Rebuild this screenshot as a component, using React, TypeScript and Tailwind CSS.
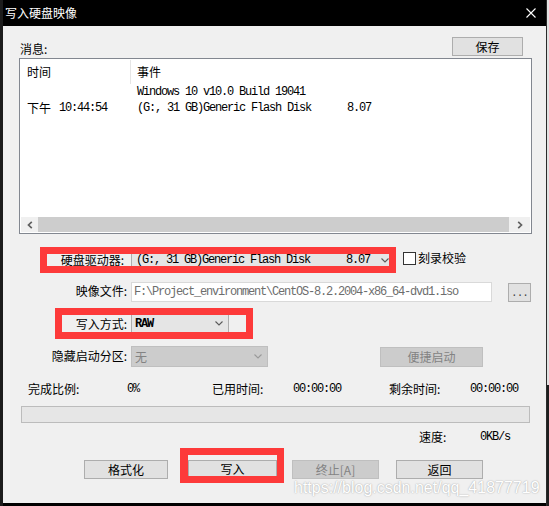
import React from "react";

const Chevron = ({ color = "#5a5a5a" }: { color?: string }) => (
  <svg width="8" height="5" viewBox="0 0 8 5" className="shrink-0">
    <path d="M0.5 0.5 L4 4 L7.5 0.5" fill="none" stroke={color} strokeWidth="1.1" />
  </svg>
);

export default function App() {
  return (
    <div className="w-[549px] h-[506px] bg-black flex overflow-hidden font-['Noto_Sans_CJK_SC','Noto_Sans',sans-serif] text-[12px] text-black">
      <div className="w-[3px] h-full bg-[#1c1c1c]" />
      <div className="w-[543px] h-full flex flex-col">
        {/* title bar */}
        <div className="h-[26px] bg-black flex items-center justify-between">
          <span className="ml-[2px] text-white text-[12px] leading-[16px]">写入硬盘映像</span>
          <svg className="mr-[10px]" width="10" height="10" viewBox="0 0 10 10">
            <path d="M0.5 0.5L9.5 9.5M9.5 0.5L0.5 9.5" stroke="white" strokeWidth="1.1" />
          </svg>
        </div>

        {/* body */}
        <div className="relative h-[477px] bg-[#f0f0f0] flex flex-col">
          {/* row: 消息 + 保存 */}
          <div className="h-[32px] flex items-start justify-between">
            <span className="ml-[17px] mt-[15px] leading-[16px]">消息:</span>
            <div className="mt-[11px] mr-[23px] w-[71px] h-[19px] bg-[#e1e1e1] border border-[#adadad] flex items-center justify-center leading-[17px]">
              保存
            </div>
          </div>

          {/* list box */}
          <div className="ml-[16px] w-[513px] h-[176px] border border-[#828790] bg-white p-px flex flex-col">
            <div className="h-[24px] flex shrink-0">
              <div className="w-[110px] border-r border-[#e5e5e5] pl-[6px] leading-[24px]">时间</div>
              <div className="pl-[6px] leading-[24px]">事件</div>
            </div>
            <div className="h-[16px] flex shrink-0">
              <div className="w-[110px]" />
              <div className="pl-[6px] leading-[16px] whitespace-pre font-['Liberation_Mono',monospace] text-[12px] tracking-[-1.2px]">
                Windows 10 v10.0 Build 19041
              </div>
            </div>
            <div className="h-[16px] flex shrink-0">
              <div className="w-[110px] pl-[6px] leading-[16px] whitespace-pre flex">
                <span>下午</span>
                <span className="ml-[2px] font-['Liberation_Mono',monospace] text-[12px] tracking-[-1.2px]"> 10:44:54</span>
              </div>
              <div className="pl-[6px] leading-[16px] whitespace-pre font-['Liberation_Mono',monospace] text-[12px] tracking-[-1.2px]">
                (G:, 31 GB)Generic Flash Disk      8.07
              </div>
            </div>
            <div className="flex-1" />
            <div className="h-[15px] flex shrink-0">
              <div className="w-[17px] bg-[#f0f0f0] flex items-center justify-center">
                <svg width="6" height="8" viewBox="0 0 6 8">
                  <path d="M4.8 0.8 L1.5 4 L4.8 7.2" fill="none" stroke="#606060" strokeWidth="1.7" />
                </svg>
              </div>
              <div className="flex-1 bg-[#cdcdcd]" />
              <div className="w-[21px] bg-[#f0f0f0] flex items-center justify-center">
                <svg width="6" height="8" viewBox="0 0 6 8">
                  <path d="M1.2 0.8 L4.5 4 L1.2 7.2" fill="none" stroke="#606060" strokeWidth="1.7" />
                </svg>
              </div>
            </div>
          </div>

          {/* drive row */}
          <div className="mt-[13px] h-[26px] flex items-start">
            <div className="ml-[37px] w-[356px] h-[26px] border-[7px] border-[#fd3a3a] flex overflow-hidden">
              <div className="w-[84px] text-right pr-[7px] leading-[12px] whitespace-nowrap">硬盘驱动器:</div>
              <div className="flex-1 bg-[#e5e5e5] border-l border-[#adadad] flex items-center pl-[4px]">
                <span className="flex-1 leading-[12px] whitespace-pre font-['Liberation_Mono',monospace] text-[12px] tracking-[-1.2px]">
                  (G:, 31 GB)Generic Flash Disk      8.07
                </span>
                <Chevron />
              </div>
            </div>
            <div className="ml-[7px] mt-[5px] w-[13px] h-[13px] bg-white border border-[#333333]" />
            <span className="ml-[2px] mt-[3px] leading-[16px]">刻录校验</span>
          </div>

          {/* image file row */}
          <div className="mt-[9px] h-[20px] flex items-start">
            <div className="w-[124px] text-right leading-[16px] mt-px">映像文件:</div>
            <div className="ml-[4px] w-[361px] h-[20px] border border-[#d9d9d9] bg-white flex items-center pl-[2px] overflow-hidden">
              <span className="whitespace-pre leading-[16px] text-[#6d6d6d] font-['Liberation_Mono',monospace] text-[12px] tracking-[-1.2px]">
                F:\Project_environment\CentOS-8.2.2004-x86_64-dvd1.iso
              </span>
            </div>
            <div className="ml-[16px] mt-px w-[23px] h-[19px] bg-[#e1e1e1] border border-[#adadad] flex items-end justify-center pb-[1px]">
              <span className="leading-[14px] font-['Liberation_Mono',monospace] text-[11px] tracking-[-1px] text-[#444]">...</span>
            </div>
          </div>

          {/* write mode row */}
          <div className="mt-[6px] h-[31px] flex items-start">
            <div className="ml-[52px] w-[198px] h-[31px] border-[7px] border-[#fd3a3a] flex overflow-hidden">
              <div className="w-[69px] text-right pr-[4px] leading-[17px] whitespace-nowrap">写入方式:</div>
              <div className="w-[98px] bg-[#e5e5e5] border-l border-r border-[#adadad] flex items-center pl-[3px] pr-[5px]">
                <span className="flex-1 leading-[14px] font-['Liberation_Mono',monospace] text-[12px] font-bold tracking-[-1.2px]">RAW</span>
                <Chevron />
              </div>
              <div className="flex-1" />
            </div>
          </div>

          {/* hidden partition row */}
          <div className="mt-[7px] h-[21px] flex items-start">
            <div className="w-[124px] text-right leading-[20px]">隐藏启动分区:</div>
            <div className="ml-[4px] w-[137px] h-[21px] bg-[#cccccc] border border-[#bfbfbf] flex items-center pl-[3px] pr-[5px]">
              <span className="flex-1 leading-[16px] text-[#838383]">无</span>
              <Chevron color="#9a9a9a" />
            </div>
            <div className="ml-[112px] mt-px w-[103px] h-[20px] bg-[#cccccc] border border-[#bfbfbf] flex items-center justify-center leading-[18px] text-[#838383]">
              便捷启动
            </div>
          </div>

          {/* stats row */}
          <div className="mt-[14px] h-[16px] flex items-start leading-[16px]">
            <span className="ml-[25px] w-[99px]">完成比例:</span>
            <span className="w-[85px] font-['Liberation_Mono',monospace] text-[12px] tracking-[-1.2px]">0%</span>
            <span className="w-[81px]">已用时间:</span>
            <span className="w-[96px] font-['Liberation_Mono',monospace] text-[12px] tracking-[-1.2px]">00:00:00</span>
            <span className="w-[81px]">剩余时间:</span>
            <span className="font-['Liberation_Mono',monospace] text-[12px] tracking-[-1.2px]">00:00:00</span>
          </div>

          {/* progress bar */}
          <div className="mt-[9px] ml-[18px] w-[509px] h-[17px] bg-[#e6e6e6] border border-[#bcbcbc]" />

          {/* speed row */}
          <div className="mt-[6px] h-[16px] flex items-start leading-[16px]">
            <span className="ml-[416px] w-[61px]">速度:</span>
            <span className="font-['Liberation_Mono',monospace] text-[12px] tracking-[-1.2px]">0KB/s</span>
          </div>

          {/* buttons row */}
          <div className="mt-[3px] h-[35px] flex items-start">
            <div className="ml-[81px] mt-[12px] w-[84px] h-[19px] bg-[#e1e1e1] border border-[#adadad] flex items-center justify-center leading-[17px]">
              格式化
            </div>
            <div className="ml-[12px] w-[104px] h-[35px] border-[7px] border-l-[8px] border-[#fd3a3a] pt-[5px] overflow-hidden">
              <div className="h-[16px] bg-[#e1e1e1] border-t border-l border-r border-[#adadad]">
                <div className="leading-[15px] text-center">写入</div>
              </div>
            </div>
            <div className="ml-[8px] mt-[12px] w-[87px] h-[19px] bg-[#cccccc] border border-[#bfbfbf] flex items-center justify-center leading-[17px] text-[#838383]">
              终止[A]
            </div>
            <div className="ml-[17px] mt-[12px] w-[87px] h-[19px] bg-[#e1e1e1] border border-[#adadad] flex items-center justify-center leading-[17px]">
              返回
            </div>
          </div>

          {/* watermark */}
          <div className="absolute left-[291px] top-[452px] whitespace-nowrap font-['Liberation_Sans',Arial,sans-serif] text-[16px] leading-[20px] text-white [text-shadow:0_0_1.5px_rgba(0,0,0,0.4)]">
            https://blog.csdn.net/qq_41877719
          </div>
        </div>
      </div>
      <div className="w-[3px] h-full flex flex-col border-l border-[#2a2a2a]">
        <div className="h-[385px] bg-[#e2e2e2]" />
        <div className="flex-1 bg-[#1e1e1e]" />
      </div>
    </div>
  );
}
